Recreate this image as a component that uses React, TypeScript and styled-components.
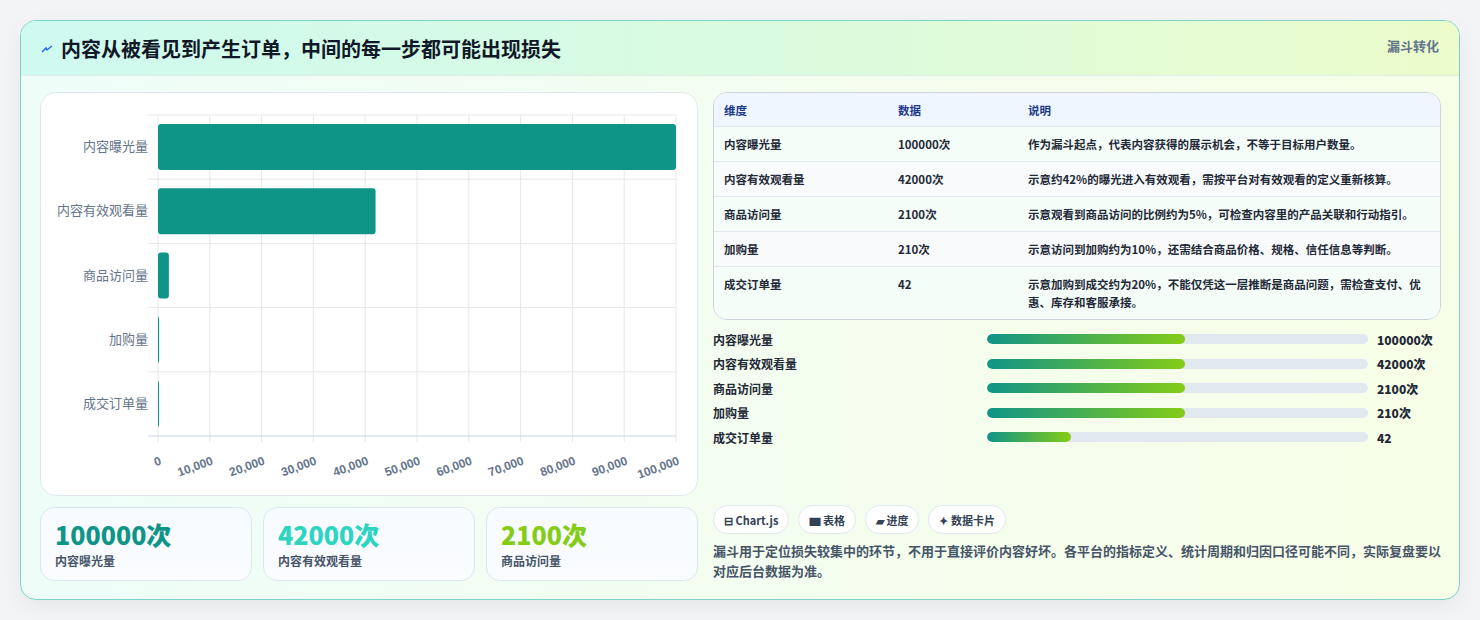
import React from "react";
import styled, { createGlobalStyle } from "styled-components";

const G = createGlobalStyle`
  html,body{margin:0;padding:0;background:#f3f4f6;}
  body{font-family:"Noto Sans CJK SC","Noto Sans",sans-serif;}
  *{box-sizing:border-box;}
`;
const Page = styled.div`padding:20px 20px 20px 20px;`;
const Card = styled.div`
  width:1440px;height:580px;border:1px solid #7dd3c8;border-radius:16px;overflow:hidden;
  background:linear-gradient(90deg,#effdf9,#f7fee7);box-shadow:0 6px 20px rgba(0,0,0,0.06);
  display:flex;flex-direction:column;
`;
const Header = styled.div`
  height:55px;flex:none;display:flex;justify-content:space-between;align-items:flex-start;
  padding:0 20px 0 20px;border-bottom:1px solid #dfeee9;
  background:linear-gradient(90deg,#cffaf0,#d9fbe0 50%,#ecfccb);
`;
const Title = styled.h1`
  margin:0;margin-top:13px;font-size:20px;font-weight:700;color:#111827;display:flex;align-items:center;gap:8px;
`;
const Tag = styled.div`margin-top:15px;font-size:13px;font-weight:700;color:#64748b;`;
const Body = styled.div`flex:1;display:grid;grid-template-columns:658px 728px;gap:15px;padding:16px 19px 18px 19px;`;
const Col = styled.div`display:flex;flex-direction:column;gap:11px;`;
const ChartBox = styled.div`height:404px;background:#fff;border:1px solid #e2e8f0;border-radius:16px;`;
const Kpis = styled.div`display:grid;grid-template-columns:repeat(3,1fr);gap:11px;`;
const Kpi = styled.div`height:74px;border:1px solid #dbe7ef;border-radius:14px;background:linear-gradient(180deg,#f7fbff,#fafcff);padding:10px 14px;`;
const KpiVal = styled.div<{c:string}>`font-size:25px;font-weight:800;color:${p=>p.c};line-height:32px;font-family:"Noto Sans CJK SC",sans-serif;`;
const KpiLbl = styled.div`font-size:12px;font-weight:600;color:#475569;margin-top:2px;`;
const Table = styled.div`border:1px solid #cbd5e1;border-radius:14px;overflow:hidden;background:#fff;`;
const Row = styled.div<{h?:boolean;alt?:boolean;tall?:boolean}>`
  display:grid;grid-template-columns:174px 130px 1fr;padding:0 10px;
  height:${p=>p.tall?"auto":p.h?"33px":"35px"};align-items:${p=>p.tall?"start":"center"};
  ${p=>p.tall?"padding-top:8px;padding-bottom:8px;":""}
  background:${p=>p.h?"#eff6ff":p.alt?"#f8fafc":"#f4fdf8"};
  border-top:${p=>p.h?"none":"1px solid #e2e8f0"};
  font-size:11.5px;font-weight:600;color:${p=>p.h?"#1e3a8a":"#1f2937"};line-height:18px;
  white-space:${p=>p.tall?"normal":"nowrap"};
`;
const Bars = styled.div`display:flex;flex-direction:column;gap:6.5px;margin-top:10px;`;
const BarRow = styled.div`display:grid;grid-template-columns:274px 381px 1fr;align-items:center;height:18px;font-size:12px;font-weight:600;color:#1f2937;`;
const Track = styled.div`height:10px;background:#e2e8f0;border-radius:5px;overflow:hidden;`;
const Fill = styled.div`height:100%;border-radius:5px;background:linear-gradient(90deg,#0f9488,#84cc16);`;
const Val = styled.div`font-weight:800;margin-left:9px;white-space:nowrap;`;
const Chips = styled.div`display:flex;gap:9px;margin-top:auto;`;
const Chip = styled.div`height:29px;padding:0 10px;border:1px solid #e2e8f0;border-radius:15px;background:#fff;display:flex;align-items:center;gap:3px;font-size:11px;font-weight:700;color:#334155;`;
const Note = styled.p`margin:7px 0 0;font-size:13px;font-weight:600;color:#475569;line-height:20px;`;

const cats=["内容曝光量","内容有效观看量","商品访问量","加购量","成交订单量"];
const vals=[100000,42000,2100,210,42];
function Chart(){
  const x0=117,x1=635,y0=22,rh=64.2;
  const sx=(v:number)=>x0+(x1-x0)*v/100000;
  return <svg width="658" height="404">
    {Array.from({length:11}).map((_,i)=>{const x=x0+(x1-x0)*i/10;return <g key={i}>
      <line x1={x} x2={x} y1={y0} y2={y0+rh*5+6} stroke="#e5e7eb"/>
      <text x={x+4} y={y0+rh*5+28} fontSize="12" fontWeight="700" fill="#64748b" textAnchor="end" transform={`rotate(-20 ${x+4} ${y0+rh*5+28})`} fontFamily="Liberation Sans,sans-serif">{(i*10000).toLocaleString("en-US")}</text></g>;})}
    {Array.from({length:6}).map((_,i)=><line key={i} x1={x0-10} x2={x1} y1={y0+rh*i} y2={y0+rh*i} stroke={i==5?"#cbd5e1":"#e5e7eb"}/>)}
    {cats.map((c,i)=>{const cy=y0+rh*i+rh/2;return <g key={c}>
      <text x={x0-10} y={cy+4} fontSize="13" fill="#64748b" textAnchor="end">{c}</text>
      <rect x={x0} y={cy-23} width={Math.max(1,sx(vals[i])-x0)} height={46} rx="3" fill="#0f9488"/></g>;})}
  </svg>;
}
const Bolt=()=> <svg width="12" height="12" viewBox="0 0 12 12"><path d="M1 9 L5 5 L6 7 L11 3" stroke="#2563eb" strokeWidth="1.4" fill="none"/></svg>;

export default function App(){
  const rows=[["内容曝光量","100000次","作为漏斗起点，代表内容获得的展示机会，不等于目标用户数量。"],["内容有效观看量","42000次","示意约42%的曝光进入有效观看，需按平台对有效观看的定义重新核算。"],["商品访问量","2100次","示意观看到商品访问的比例约为5%，可检查内容里的产品关联和行动指引。"],["加购量","210次","示意访问到加购约为10%，还需结合商品价格、规格、信任信息等判断。"],["成交订单量","42","示意加购到成交约为20%，不能仅凭这一层推断是商品问题，需检查支付、优惠、库存和客服承接。"]];
  const pct=[52,52,52,52,22];
  return <Page><G/><Card>
    <Header><Title><Bolt/>内容从被看见到产生订单，中间的每一步都可能出现损失</Title><Tag>漏斗转化</Tag></Header>
    <Body>
      <Col>
        <ChartBox><Chart/></ChartBox>
        <Kpis>
          <Kpi><KpiVal c="#0f9488">100000次</KpiVal><KpiLbl>内容曝光量</KpiLbl></Kpi>
          <Kpi><KpiVal c="#2dd4bf">42000次</KpiVal><KpiLbl>内容有效观看量</KpiLbl></Kpi>
          <Kpi><KpiVal c="#84cc16">2100次</KpiVal><KpiLbl>商品访问量</KpiLbl></Kpi>
        </Kpis>
      </Col>
      <Col style={{gap:0}}>
        <Table>
          <Row h><div>维度</div><div>数据</div><div>说明</div></Row>
          {rows.map((r,i)=><Row key={i} alt={i%2==1} tall={i==4}><div>{r[0]}</div><div>{r[1]}</div><div>{r[2]}</div></Row>)}
        </Table>
        <Bars>{rows.map((r,i)=><BarRow key={i}><div>{r[0]}</div><Track><Fill style={{width:pct[i]+"%"}}/></Track><Val>{r[1]}</Val></BarRow>)}</Bars>
        <Chips><Chip>⊟ Chart.js</Chip><Chip>▆ 表格</Chip><Chip>▰ 进度</Chip><Chip>✦ 数据卡片</Chip></Chips>
        <Note>漏斗用于定位损失较集中的环节，不用于直接评价内容好坏。各平台的指标定义、统计周期和归因口径可能不同，实际复盘要以对应后台数据为准。</Note>
      </Col>
    </Body>
  </Card></Page>;
}
